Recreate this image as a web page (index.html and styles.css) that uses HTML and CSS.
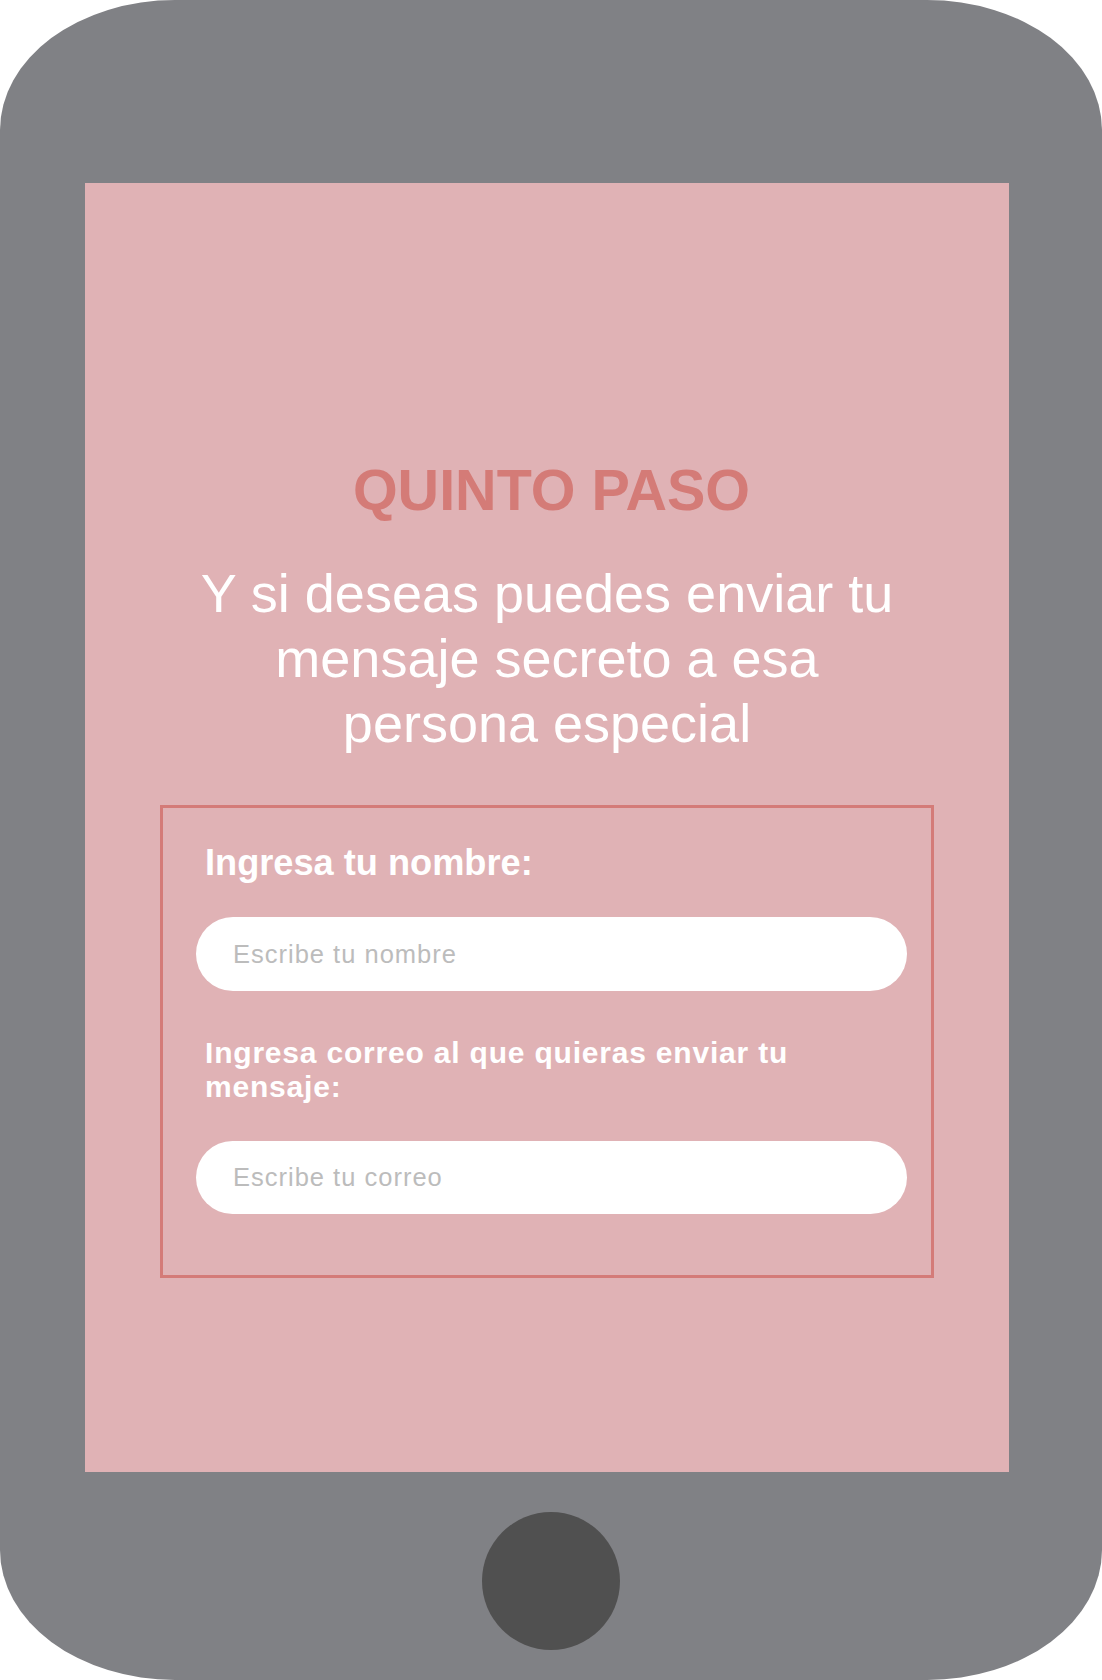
FILE: index.html
```html
<!DOCTYPE html>
<html lang="es">
<head>
<meta charset="utf-8">
<title>Quinto paso</title>
<link rel="stylesheet" href="styles.css">
</head>
<body>
<div class="phone">
  <div class="screen">
    <h1 class="title">QUINTO PASO</h1>
    <p class="lead">Y si deseas puedes enviar tu mensaje secreto a esa persona especial</p>
    <form class="card">
      <label class="label label-name" for="nombre">Ingresa tu nombre:</label>
      <input class="field" id="nombre" type="text" placeholder="Escribe tu nombre">
      <label class="label label-mail" for="correo">Ingresa correo al que quieras enviar tu mensaje:</label>
      <input class="field field-mail" id="correo" type="email" placeholder="Escribe tu correo">
    </form>
  </div>
  <div class="home"></div>
</div>
</body>
</html>
```

FILE: styles.css
```css
html, body {
  margin: 0;
  padding: 0;
  background: #ffffff;
}

body {
  font-family: "Liberation Sans", Arial, sans-serif;
}

.phone {
  width: 1102px;
  height: 1680px;
  box-sizing: border-box;
  padding-top: 183px;
  background: #808185;
  border-radius: 175px / 130px;
  overflow: hidden;
}

.screen {
  margin-left: 85px;
  width: 924px;
  height: 1289px;
  box-sizing: border-box;
  padding-top: 279px;
  background: #e0b2b5;
  display: flex;
  flex-direction: column;
  align-items: center;
}

.title {
  margin: 0 0 0 9px;
  font-size: 57.5px;
  line-height: 57.5px;
  font-weight: 700;
  color: #d47b77;
}

.lead {
  margin: 41.5px 0 0;
  width: 720px;
  font-size: 54px;
  line-height: 65px;
  color: #ffffff;
  text-align: center;
}

.card {
  margin: 49px 0 0;
  width: 774px;
  height: 473px;
  box-sizing: border-box;
  border: 3px solid #d47b78;
  padding: 34px 0 0 33px;
  display: flex;
  flex-direction: column;
  align-items: flex-start;
}

.label {
  display: block;
  margin-left: 9px;
  color: #ffffff;
  font-weight: 700;
}

.label-name {
  font-size: 36.2px;
  line-height: 41px;
}

.label-mail {
  margin-top: 45px;
  max-width: 640px;
  font-size: 30px;
  line-height: 34px;
  letter-spacing: 0.8px;
}

.field {
  margin-top: 34px;
  width: 711px;
  height: 74px;
  box-sizing: border-box;
  border: none;
  border-radius: 37px;
  background: #ffffff;
  padding: 0 0 0 37px;
  font-family: "Liberation Sans", Arial, sans-serif;
  font-size: 25.5px;
  letter-spacing: 1px;
  color: #555555;
  outline: none;
}

.field-mail {
  margin-top: 37px;
  height: 73px;
}

.field::placeholder {
  color: #bcbcbc;
  opacity: 1;
}

.home {
  margin: 40px auto 0;
  width: 138px;
  height: 138px;
  border-radius: 50%;
  background: #505050;
}
```
